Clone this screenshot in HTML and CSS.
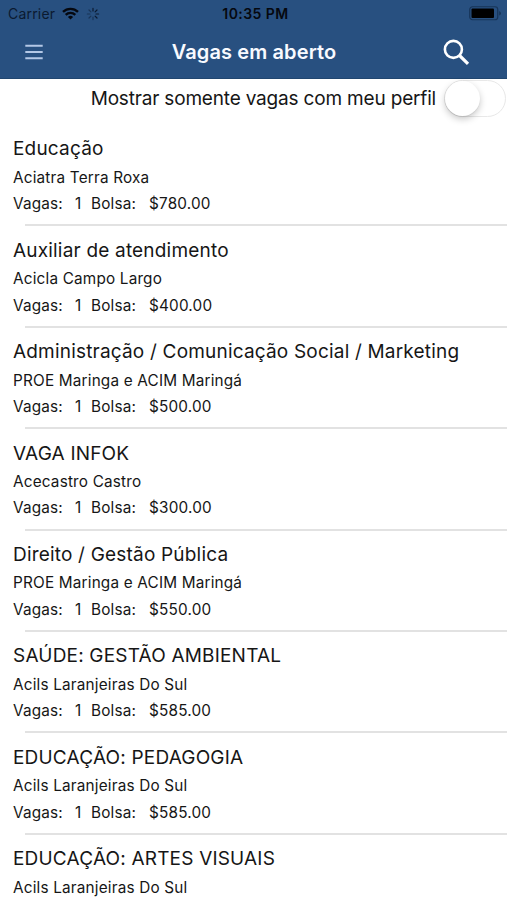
FILE: index.html
```html
<!DOCTYPE html>
<html lang="pt-BR">
<head>
<meta charset="utf-8">
<title>Vagas em aberto</title>
<link rel="stylesheet" href="styles.css">
</head>
<body>
<header class="header">
  <div class="status">
    <div class="status-left">
      <span class="carrier">Carrier</span>
      <svg class="wifi" width="17" height="13" viewBox="0 0 17 13" fill="none" stroke="#05080f" stroke-width="2.3"><path d="M1 4.9a10.6 10.6 0 0 1 15 0M3.7 7.9a6.8 6.8 0 0 1 9.6 0"/><path d="M8.5 12.6 5.9 10a3.7 3.7 0 0 1 5.2 0z" fill="#05080f" stroke="none"/></svg>
      <svg class="spinner" width="14" height="14" viewBox="-7 -7 14 14" stroke="#0b1a30" stroke-width="1.2" stroke-linecap="round"><path d="M0-3V-5.6M2.1-2.1l1.9-1.9M3 0h2.6M2.1 2.1 4 4"/><path opacity=".5" d="M0 3v2.6M-2.1 2.1-4 4M-3 0h-2.6M-2.1-2.1-4-4"/></svg>
    </div>
    <span class="time">10:35 PM</span>
    <svg class="battery" width="33" height="15" viewBox="0 0 33 15"><rect x=".75" y=".75" width="28" height="13" rx="2.8" fill="none" stroke="#173457" stroke-width="1.2"/><rect x="2.5" y="2.5" width="22.5" height="9.5" rx="1" fill="#000"/><path d="M30.2 5v4.6q1.7-.7 1.7-2.3T30.2 5z" fill="#173457"/></svg>
  </div>
  <div class="navbar">
    <svg class="menu" width="18" height="16" viewBox="0 0 18 16" stroke="#b4c8e6" stroke-width="2"><path d="M.3 1.7h17.4M.3 8h17.4M.3 14.2h17.4"/></svg>
    <h1 class="heading">Vagas em aberto</h1>
    <svg class="search" width="27" height="27" viewBox="0 0 27 27" fill="none" stroke="#fff"><circle cx="10.4" cy="10.4" r="8.5" stroke-width="2.6"/><path d="m16.5 16.5 8.5 8.3" stroke-width="3.2"/></svg>
  </div>
</header>
<main>
  <div class="filter"><span class="filter-label">Mostrar somente vagas com meu perfil</span><span class="switch"><span class="knob"></span></span></div>
  <ul class="list">
    <li class="job"><h2 class="title">Educação</h2><p class="company">Aciatra Terra Roxa</p><p class="info"><span class="openings">Vagas:</span><span class="count">1</span><span class="grant">Bolsa:</span><span>$780.00</span></p></li>
    <li class="job"><h2 class="title">Auxiliar de atendimento</h2><p class="company">Acicla Campo Largo</p><p class="info"><span class="openings">Vagas:</span><span class="count">1</span><span class="grant">Bolsa:</span><span>$400.00</span></p></li>
    <li class="job"><h2 class="title">Administração / Comunicação Social / Marketing</h2><p class="company">PROE Maringa e ACIM Maringá</p><p class="info"><span class="openings">Vagas:</span><span class="count">1</span><span class="grant">Bolsa:</span><span>$500.00</span></p></li>
    <li class="job"><h2 class="title">VAGA INFOK</h2><p class="company">Acecastro Castro</p><p class="info"><span class="openings">Vagas:</span><span class="count">1</span><span class="grant">Bolsa:</span><span>$300.00</span></p></li>
    <li class="job"><h2 class="title">Direito / Gestão Pública</h2><p class="company">PROE Maringa e ACIM Maringá</p><p class="info"><span class="openings">Vagas:</span><span class="count">1</span><span class="grant">Bolsa:</span><span>$550.00</span></p></li>
    <li class="job"><h2 class="title">SAÚDE: GESTÃO AMBIENTAL</h2><p class="company">Acils Laranjeiras Do Sul</p><p class="info"><span class="openings">Vagas:</span><span class="count">1</span><span class="grant">Bolsa:</span><span>$585.00</span></p></li>
    <li class="job"><h2 class="title">EDUCAÇÃO: PEDAGOGIA</h2><p class="company">Acils Laranjeiras Do Sul</p><p class="info"><span class="openings">Vagas:</span><span class="count">1</span><span class="grant">Bolsa:</span><span>$585.00</span></p></li>
    <li class="job"><h2 class="title">EDUCAÇÃO: ARTES VISUAIS</h2><p class="company">Acils Laranjeiras Do Sul</p></li>
  </ul>
</main>
</body>
</html>
```
FILE: styles.css
```css
* { box-sizing: border-box; margin: 0; padding: 0; }
html, body { height: 900px; overflow: hidden; }
body { display: flex; flex-direction: column; background: #fff; color: #161616; font-family: Inter, "Liberation Sans", sans-serif; }
svg { display: block; flex: none; }
.header { flex: none; height: 79px; background: #285080; border-bottom: 1px solid #21466f; }
.status { display: grid; grid-template-columns: 1fr auto 1fr; align-items: center; height: 27px; padding: 0 5px 0 8px; color: #05080f; }
.status-left { display: flex; align-items: center; }
.carrier { font-size: 14px; letter-spacing: .2px; color: #0b1a30; }
.wifi { margin-left: 7px; }
.spinner { margin-left: 7px; }
.time { margin-left: 1px; font-size: 14px; font-weight: 600; letter-spacing: .45px; }
.battery { justify-self: end; }
.navbar { display: grid; grid-template-columns: 1fr auto 1fr; align-items: center; height: 50px; padding: 0 37px; }
.menu { margin-left: -12px; }
.heading { margin-left: 1px; font-size: 20px; font-weight: 600; line-height: 24px; letter-spacing: .12px; color: #f8faff; }
.search { justify-self: end; }
.filter { display: flex; align-items: center; justify-content: flex-end; height: 40px; padding-right: 1px; gap: 8px; }
.filter-label { font-size: 19px; line-height: 24px; letter-spacing: -.18px; white-space: nowrap; }
.switch { flex: none; width: 62px; height: 37px; margin-bottom: 2px; border: 1.5px solid #e8e8e8; border-radius: 19px; background: #fff; }
.knob { display: block; width: 35px; height: 35px; border-radius: 50%; background: #fff; box-shadow: 0 3px 7px rgba(0,0,0,.22), 0 1px 1px rgba(0,0,0,.06); }
.list { list-style: none; padding-top: 6.1px; }
.job { height: 101.4px; padding: 11.4px 0 0 13px; background: linear-gradient(#e2e2e2, #e2e2e2) 25px 100% / 100% 2px no-repeat; }
.title { font-size: 19px; font-weight: 400; line-height: 26px; letter-spacing: .19px; white-space: nowrap; }
.company { margin-top: 2.4px; font-size: 15.3px; line-height: 26px; letter-spacing: .19px; }
.info { display: flex; margin-top: .3px; font-size: 15.3px; line-height: 26px; letter-spacing: .19px; }
.openings { width: 62px; }
.count { width: 16px; }
.grant { width: 58px; }
```
